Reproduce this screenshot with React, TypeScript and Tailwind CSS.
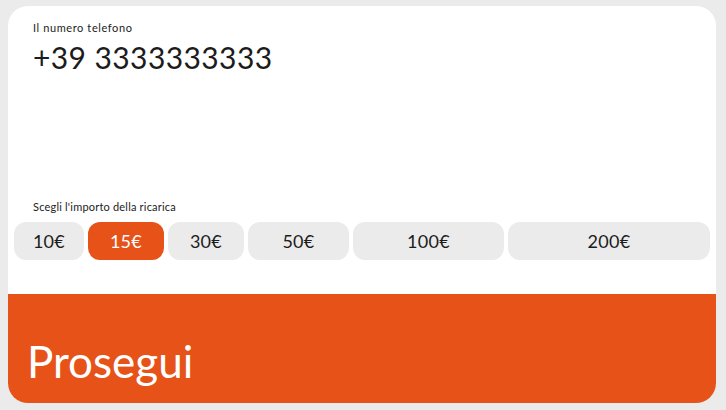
const amounts = [
  { label: '10€', w: 'w-[70px]' },
  { label: '15€', w: 'w-[76px]', active: true },
  { label: '30€', w: 'w-[76px]' },
  { label: '50€', w: 'w-[101px]' },
  { label: '100€', w: 'w-[151px]' },
  { label: '200€', w: 'w-[202px]' },
];

export default function App() {
  return (
    <div className="h-[410px] w-[726px] bg-[#ebebeb] pt-[6px] pl-[8px] font-['Lato',sans-serif]">
      <div className="flex h-[397px] w-[708px] flex-col overflow-hidden rounded-[20px] bg-white">
        {/* Phone */}
        <div className="px-[25px] pt-[15px]">
          <p className="text-[11px] leading-[14px] tracking-[0.6px] text-[#222]">Il numero telefono</p>
          <p className="mt-[4px] text-[30px] leading-[36px] tracking-[0.4px] text-[#1c1c1c]">+39 3333333333</p>
        </div>

        {/* Amounts */}
        <div className="mt-[125px] px-[25px]">
          <p className="text-[11px] leading-[14px] tracking-[0.2px] text-[#222]">Scegli l'importo della ricarica</p>
        </div>
        <div className="mt-[8px] flex gap-[4px] pl-[6px]">
          {amounts.map((a) => (
            <button
              key={a.label}
              className={`flex h-[38px] items-center justify-center rounded-[12px] text-[18px] tracking-[0.3px] ${a.w} ${
                a.active ? 'bg-[#e65218] text-white' : 'bg-[#ebebeb] text-[#1c1c1c]'
              }`}
            >
              {a.label}
            </button>
          ))}
        </div>

        {/* CTA */}
        <div className="mt-[34px] flex flex-1 items-end bg-[#e65218] px-[19px] pb-[16px]">
          <span className="text-[44px] leading-[52px] text-white">Prosegui</span>
        </div>
      </div>
    </div>
  );
}
